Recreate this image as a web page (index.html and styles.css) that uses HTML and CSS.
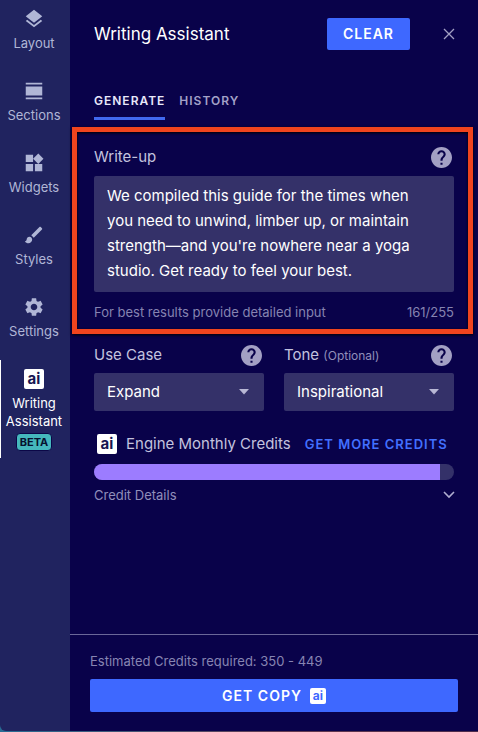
FILE: index.html
```html
<!DOCTYPE html>
<html lang="en">
<head>
  <meta charset="UTF-8">
  <meta name="viewport" content="width=device-width, initial-scale=1">
  <title>Writing Assistant</title>
  <link rel="stylesheet" href="styles.css">
</head>
<body>

<!-- Shared icons -->
<svg class="sprite" aria-hidden="true">
  <symbol id="icon-help" viewBox="2 2 20 20">
    <path d="M12 2C6.48 2 2 6.48 2 12s4.48 10 10 10 10-4.48 10-10S17.52 2 12 2zm1 17h-2v-2h2v2zm2.07-7.75l-.9.92C13.45 12.9 13 13.5 13 15h-2v-.5c0-1.1.45-2.1 1.17-2.83l1.24-1.26c.37-.36.59-.86.59-1.41 0-1.1-.9-2-2-2s-2 .9-2 2H8c0-2.21 1.79-4 4-4s4 1.79 4 4c0 .88-.36 1.68-.93 2.25z"/>
  </symbol>
  <symbol id="icon-arrow" viewBox="0 0 10 6">
    <path d="M0 0h10L5 5.500z"/>
  </symbol>
</svg>

<div class="app">

  <nav class="sidebar">
    <a class="nav-item" href="#layout">
      <svg class="nav-icon" viewBox="0 0 24 24"><path d="M11.99 18.54l-7.37-5.73L3 14.070l9 7 9-7-1.630-1.270-7.380 5.740zM12 16l7.360-5.730L21 9l-9-7-9 7 1.630 1.270L12 16z"/></svg>
      Layout
    </a>
    <a class="nav-item" href="#sections">
      <svg class="nav-icon" viewBox="0 0 24 24"><path d="M3 3h18v2H3zM3 7h18v10H3zM3 19h18v2H3z"/></svg>
      Sections
    </a>
    <a class="nav-item" href="#widgets">
      <svg class="nav-icon" viewBox="0 0 24 24"><path d="M13 13v8h8v-8h-8zM3 21h8v-8H3v8zM3 3v8h8V3H3zm13.660-1.310L11 7.340 16.660 13l5.660-5.660-5.660-5.650z"/></svg>
      Widgets
    </a>
    <a class="nav-item" href="#styles">
      <svg class="nav-icon" viewBox="0 0 24 24"><path d="M7 14c-1.660 0-3 1.340-3 3 0 1.310-1.160 2-2 2 .92 1.220 2.490 2 4 2 2.210 0 4-1.790 4-4 0-1.660-1.340-3-3-3zm13.710-9.370l-1.340-1.340c-.39-.39-1.020-.39-1.410 0L9 12.250 11.750 15l8.960-8.960c.39-.39.39-1.020 0-1.410z"/></svg>
      Styles
    </a>
    <a class="nav-item" href="#settings">
      <svg class="nav-icon" viewBox="0 0 24 24"><path d="M19.140 12.940c.04-.3.06-.61.06-.94 0-.32-.02-.64-.07-.94l2.030-1.580c.18-.14.23-.41.12-.61l-1.920-3.320c-.12-.22-.37-.29-.59-.22l-2.390.96c-.5-.38-1.030-.7-1.620-.94l-.36-2.540c-.04-.24-.24-.41-.48-.41h-3.840c-.24 0-.43.17-.47.41l-.36 2.540c-.59.24-1.130.57-1.620.94l-2.390-.96c-.22-.08-.47 0-.59.22L2.740 8.870c-.12.21-.08.47.12.61l2.030 1.580c-.05.3-.09.63-.09.94s.02.64.07.94l-2.030 1.580c-.18.14-.23.41-.12.61l1.920 3.320c.12.22.37.29.59.22l2.390-.96c.5.38 1.030.7 1.620.94l.36 2.540c.05.24.24.41.48.41h3.840c.24 0 .44-.17.47-.41l.36-2.540c.59-.24 1.130-.56 1.620-.94l2.390.96c.22.08.47 0 .59-.22l1.920-3.320c.12-.22.07-.47-.12-.61l-2.010-1.580zM12 15.600c-1.980 0-3.600-1.620-3.600-3.600s1.620-3.600 3.600-3.600 3.600 1.620 3.600 3.600-1.620 3.600-3.600 3.600z"/></svg>
      Settings
    </a>
    <a class="nav-item active" href="#writing-assistant" aria-current="page">
      <span class="nav-icon"><span class="ai-logo">ai</span></span>
      Writing Assistant
      <span class="beta">BETA</span>
    </a>
  </nav>

  <main class="panel">
    <header class="panel-header">
      <h1>Writing Assistant</h1>
      <button class="btn btn-clear" type="button">CLEAR</button>
      <button class="icon-btn close" type="button" aria-label="Close">
        <svg viewBox="0 0 10 10"><path d="M0 0l10 10M10 0L0 10"/></svg>
      </button>
    </header>

    <div class="tabs" role="tablist">
      <button class="tab selected" type="button" role="tab" aria-selected="true">GENERATE</button>
      <button class="tab" type="button" role="tab" aria-selected="false">HISTORY</button>
    </div>

    <section class="writeup">
      <div class="label-row">
        <label for="writeup">Write-up</label>
        <button class="icon-btn help" type="button" aria-label="Write-up help"><svg><use href="#icon-help"/></svg></button>
      </div>
      <textarea id="writeup" rows="4">We compiled this guide for the times when you need to unwind, limber up, or maintain strength—and you're nowhere near a yoga studio. Get ready to feel your best.</textarea>
      <div class="hint">
        <span>For best results provide detailed input</span>
        <span>161/255</span>
      </div>
    </section>

    <div class="options">
      <div class="field">
        <div class="label-row">
          <label for="useCase">Use Case</label>
          <button class="icon-btn help" type="button" aria-label="Use case help"><svg><use href="#icon-help"/></svg></button>
        </div>
        <div class="select">
          <select id="useCase"><option>Expand</option></select>
          <svg><use href="#icon-arrow"/></svg>
        </div>
      </div>
      <div class="field">
        <div class="label-row">
          <label for="tone">Tone <small>(Optional)</small></label>
          <button class="icon-btn help" type="button" aria-label="Tone help"><svg><use href="#icon-help"/></svg></button>
        </div>
        <div class="select">
          <select id="tone"><option>Inspirational</option></select>
          <svg><use href="#icon-arrow"/></svg>
        </div>
      </div>
    </div>

    <section class="credits">
      <div class="credits-row">
        <span class="ai-logo">ai</span>
        <span class="credits-title">Engine Monthly Credits</span>
        <a href="#credits">GET MORE CREDITS</a>
      </div>
      <div class="meter"><div class="meter-fill" style="width: 96%"></div></div>
      <button class="details" type="button">
        Credit Details
        <svg viewBox="0 0 12 8"><path d="M1 1l5 5 5-5"/></svg>
      </button>
    </section>

    <footer class="panel-footer">
      <p>Estimated Credits required: 350 - 449</p>
      <button class="btn btn-copy" type="button">GET COPY <span class="ai-logo">ai</span></button>
    </footer>
  </main>

</div>

</body>
</html>
```

FILE: styles.css
```css
* {
  box-sizing: border-box;
}

body {
  font-family: Inter, 'Liberation Sans', sans-serif;
  font-size: 15px;
  line-height: 20px;
  margin: 0;
  padding-bottom: 1px;
  color: #c3c2df;
  background: linear-gradient(90deg, #286c94, #653a50 60%, #4b2b4c);
}

button, textarea, select {
  font: inherit;
  color: inherit;
  border: none;
  margin: 0;
  padding: 0;
  background: none;
}

button, select {
  cursor: pointer;
}

svg {
  display: block;
  fill: currentColor;
}

.sprite {
  display: none;
}

.app {
  display: flex;
  min-height: calc(100vh - 1px);
  border-bottom-left-radius: 6px;
  overflow: hidden;
}

/* Sidebar */
.sidebar {
  flex: 0 0 70px;
  display: flex;
  flex-direction: column;
  gap: 13px;
  background: #20235f;
}

.nav-item {
  display: flex;
  flex-direction: column;
  align-items: center;
  padding: 7px 2px 7px 0;
  font-size: 13px;
  line-height: 18px;
  text-align: center;
  text-decoration: none;
  color: #b0b6d6;
}

.nav-icon {
  display: flex;
  align-items: center;
  justify-content: center;
  width: 22px;
  height: 24px;
  margin-bottom: 3px;
}

.nav-item.active {
  color: #fff;
  box-shadow: inset 1px 0 #fff;
}

.ai-logo {
  display: inline-flex;
  align-items: center;
  justify-content: center;
  width: 20px;
  height: 20px;
  border-radius: 2px;
  background: #fff;
  color: #171652;
  font-size: 15px;
  font-weight: 700;
  line-height: 20px;
}

.beta {
  margin-top: 3px;
  padding: 0 3px;
  border: 1px solid #0b0747;
  border-radius: 4px;
  background: #45b8bd;
  color: #07122f;
  font-size: 11px;
  font-weight: 700;
  line-height: 16px;
}

/* Main panel */
.panel {
  flex: 1;
  min-width: 0;
  display: flex;
  flex-direction: column;
  background: #09024a;
}

.panel-header {
  display: flex;
  align-items: center;
  padding: 18px 24px 0;
}

h1 {
  flex: 1;
  margin: 0;
  font-size: 17px;
  font-weight: 400;
  color: #fff;
}

.btn {
  border-radius: 2px;
  background: #3e68ff;
  color: #fff;
  font-size: 14px;
  font-weight: 600;
  letter-spacing: 1px;
}

.btn-clear {
  height: 32px;
  padding: 0 16px;
}

.icon-btn {
  color: #a3a0c4;
}

.close {
  margin-left: 34px;
}

.close svg {
  width: 10px;
  height: 10px;
  fill: none;
  stroke: currentColor;
  stroke-width: 1.3;
  overflow: visible;
}

.tabs {
  display: flex;
  gap: 14px;
  padding: 41px 24px 7px;
}

.tab {
  padding-bottom: 6px;
  border-bottom: 3px solid transparent;
  color: #a3a1c8;
  font-size: 12px;
  font-weight: 600;
  letter-spacing: 1px;
}

.tab.selected {
  color: #e8e8fa;
  border-color: #4169ef;
}

.writeup {
  margin: 0 5px 0 2px;
  padding: 14px 14px 7px 17px;
  border: 5px solid #f0441e;
  box-shadow: 0 1px 3px #000, inset 0 1px 3px #000;
}

.label-row {
  display: flex;
  align-items: center;
  justify-content: space-between;
  height: 22px;
  padding-right: 2px;
}

.label-row small {
  font-size: 12px;
  color: #918fba;
}

.help svg {
  width: 21px;
  height: 21px;
}

textarea {
  display: block;
  width: 100%;
  height: 116px;
  margin-top: 8px;
  padding: 7px 30px 7px 13px;
  border-radius: 2px;
  background: #343169;
  color: #fff;
  line-height: 25px;
  resize: none;
  overflow: hidden;
}

.hint {
  display: flex;
  justify-content: space-between;
  margin-top: 10px;
  font-size: 13px;
  color: #8684b1;
}

/* Use case and tone */
.options {
  display: grid;
  grid-template-columns: 1fr 1fr;
  gap: 20px;
  padding: 10px 24px 0;
}

.select {
  display: grid;
  align-items: center;
  margin-top: 7px;
}

.select select,
.select svg {
  grid-area: 1 / 1;
}

.select select {
  appearance: none;
  width: 100%;
  height: 38px;
  padding: 0 32px 0 13px;
  border-radius: 2px;
  background: #343169;
  color: #fff;
}

.select svg {
  justify-self: end;
  width: 10px;
  height: 6px;
  margin-right: 15px;
  color: #b8b7d4;
  pointer-events: none;
}

/* Credits */
.credits {
  padding: 23px 24px 24px;
}

.credits-row {
  display: flex;
  align-items: center;
  padding-left: 3px;
  white-space: nowrap;
}

.credits-title {
  margin: 0 14px 0 9px;
}

.credits-row a {
  color: #4270ff;
  font-size: 13px;
  font-weight: 600;
  letter-spacing: 1px;
  text-decoration: none;
}

.meter {
  height: 16px;
  margin-top: 10px;
  border-radius: 8px;
  background: #343169;
  overflow: hidden;
}

.meter-fill {
  height: 100%;
  background: #9c7cff;
}

.details {
  display: flex;
  align-items: center;
  justify-content: space-between;
  width: 100%;
  margin-top: 5px;
  font-size: 13px;
  color: #918fba;
}

.details svg {
  width: 12px;
  height: 8px;
  margin-right: -1px;
  fill: none;
  stroke: #b0aed0;
  stroke-width: 1.6;
}

/* Footer */
.panel-footer {
  margin-top: auto;
  padding: 16px 20px 19px;
  border-top: 1px solid #6a6799;
}

.panel-footer p {
  margin: 0 0 8px;
  font-size: 13px;
  color: #8785b2;
}

.btn-copy {
  display: flex;
  align-items: center;
  justify-content: center;
  gap: 8px;
  width: 100%;
  height: 33px;
}

.btn-copy .ai-logo {
  width: 16px;
  height: 16px;
  color: #3e68ff;
  font-size: 12px;
  line-height: 16px;
  letter-spacing: 0;
}
```
